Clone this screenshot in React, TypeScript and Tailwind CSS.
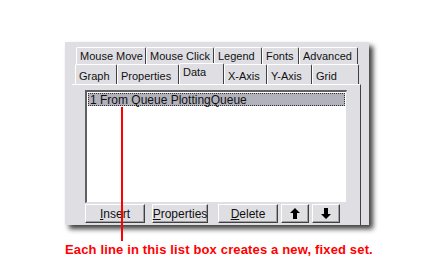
import React from "react";

type Tab = { label: string; w: number; selected?: boolean };

const topRow: Tab[] = [
    { label: "Mouse Move", w: 70 },
    { label: "Mouse Click", w: 68 },
    { label: "Legend", w: 48 },
    { label: "Fonts", w: 37 },
    { label: "Advanced", w: 59 },
];

const bottomRow: Tab[] = [
    { label: "Graph", w: 42 },
    { label: "Properties", w: 62 },
    { label: "Data", w: 45, selected: true },
    { label: "X-Axis", w: 43 },
    { label: "Y-Axis", w: 45 },
    { label: "Grid", w: 47 },
];

const TabButton = ({ tab, lower }: { tab: Tab; lower?: boolean }) => (
    <div
        style={{ width: tab.w }}
        className={`flex items-center pl-[3px] border-t border-l border-white border-r border-r-[#404040] rounded-tl-[2px] rounded-tr-[2px] bg-[#dfdfe3] ${
            tab.selected ? "-mt-[1px] pb-[4px] relative z-10" : lower ? "pt-[3px]" : ""
        }`}
    >
        <span>{tab.label}</span>
    </div>
);

const WinButton = ({ children, w }: { children: React.ReactNode; w: number }) => (
    <div
        style={{ width: w }}
        className="h-[19px] flex items-center justify-center bg-[#dfdfe3] border-t border-l border-white border-r border-b border-r-[#404040] border-b-[#404040] shadow-[inset_-1px_-1px_0_#a0a0a0]"
    >
        {children}
    </div>
);

const Arrow = ({ up }: { up?: boolean }) => (
    <svg width="10" height="11" viewBox="0 0 10 11">
        <polygon
            points={up ? "5,0 10,5 7,5 7,11 3,11 3,5 0,5" : "5,11 10,6 7,6 7,0 3,0 3,6 0,6"}
            fill="#000"
        />
    </svg>
);

export default function App() {
    return (
        <div className="relative w-[443px] h-[276px] bg-white font-['Liberation_Sans',Arial,sans-serif] overflow-hidden">
            <div className="pt-[42px] pl-[65px]">
                {/* Dialog panel */}
                <div className="w-[304px] h-[183px] bg-[#dfdfe3] shadow-[4px_4px_5px_rgba(0,0,0,0.75)] text-[11px] text-[#111] flex flex-col">
                    <div className="pt-[5px] flex flex-col">
                        <div className="flex h-[17px] ml-[11px]">
                            {topRow.map((t) => (
                                <TabButton key={t.label} tab={t} />
                            ))}
                        </div>
                        <div className="flex h-[20px] ml-[10px]">
                            {bottomRow.map((t) => (
                                <TabButton key={t.label} tab={t} lower />
                            ))}
                        </div>
                    </div>

                    {/* Tab page */}
                    <div className="ml-[7px] w-[289px] flex-1 border-t border-white border-r border-r-[#404040] pt-[5px] pl-[13px]">
                        <div className="w-[262px] h-[113px] bg-white border-t-2 border-l-2 border-t-[#606060] border-l-[#606060] border-r border-b border-r-[#dfdfe3] border-b-[#dfdfe3] p-[1px]">
                            <div className="h-[13px] bg-[#b2b2bc] border border-dotted border-[#333] flex items-center text-[12px] leading-none pl-[1px]">
                                1 From Queue PlottingQueue
                            </div>
                        </div>
                        <div className="flex gap-[3px] mt-[1px] text-[12px]">
                            <WinButton w={60}>
                                <span>
                                    <u>I</u>nsert
                                </span>
                            </WinButton>
                            <div className="w-[1px]" />
                            <WinButton w={56}>
                                <span>
                                    <u>P</u>roperties
                                </span>
                            </WinButton>
                            <div className="w-[4px]" />
                            <WinButton w={60}>
                                <span>
                                    <u>D</u>elete
                                </span>
                            </WinButton>
                            <WinButton w={28}>
                                <Arrow up />
                            </WinButton>
                            <WinButton w={28}>
                                <Arrow />
                            </WinButton>
                        </div>
                    </div>
                </div>
            </div>

            {/* Callout */}
            <div className="absolute left-[121px] top-[107px] w-[2px] h-[134px] bg-[#ff0000]" />
            <p className="mt-[17px] ml-[65px] text-[13px] font-bold text-[#ff0000] tracking-[0.15px] leading-[16px]">
                Each line in this list box creates a new, fixed set.
            </p>
        </div>
    );
}
